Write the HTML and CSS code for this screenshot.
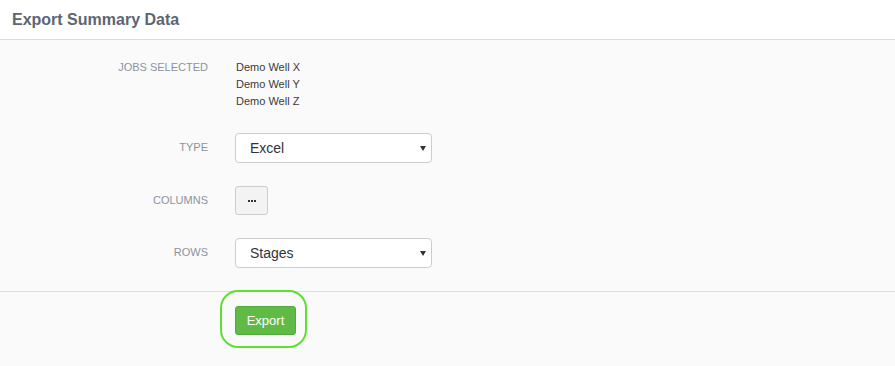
FILE: index.html
```html
<!DOCTYPE html>
<html lang="en">
<head>
    <meta charset="UTF-8">
    <title>Export Summary Data</title>
    <link rel="stylesheet" href="styles.css">
</head>
<body>

    <div class="panel-header">
        <h2>Export Summary Data</h2>
    </div>

    <div class="panel-body">
        <div class="form-row">
            <div class="form-label">Jobs Selected</div>
            <div class="jobs-list">
                <div>Demo Well X</div>
                <div>Demo Well Y</div>
                <div>Demo Well Z</div>
            </div>
        </div>

        <div class="form-row">
            <div class="form-label control-label">Type</div>
            <div class="select-box">
                <select>
                    <option>Excel</option>
                    <option>CSV</option>
                </select>
            </div>
        </div>

        <div class="form-row">
            <div class="form-label control-label">Columns</div>
            <button class="btn-more" type="button">
                <svg width="8" height="2" viewBox="0 0 8 2">
                    <rect x="0" y="0" width="2" height="2" fill="#333"/>
                    <rect x="3" y="0" width="2" height="2" fill="#333"/>
                    <rect x="6" y="0" width="2" height="2" fill="#333"/>
                </svg>
            </button>
        </div>

        <div class="form-row">
            <div class="form-label control-label">Rows</div>
            <div class="select-box">
                <select>
                    <option>Stages</option>
                    <option>Jobs</option>
                </select>
            </div>
        </div>
    </div>

    <div class="panel-footer">
        <div class="export-wrap">
            <button class="btn-export" type="button">Export</button>
            <span class="highlight-ring"></span>
        </div>
    </div>

</body>
</html>
```

FILE: styles.css
```css
body {
    margin: 0;
    font-family: 'Liberation Sans', Arial, sans-serif;
    background: #fafafa;
    color: #333;
}

.panel-header {
    background: #fff;
    height: 39px;
    border-bottom: 1px solid #dcdcdc;
    display: flex;
    align-items: center;
    padding-left: 12px;
}

.panel-header h2 {
    margin: 0;
    font-size: 16px;
    font-weight: bold;
    color: #5d6572;
}

.panel-body {
    padding: 19px 0 23px;
    display: flex;
    flex-direction: column;
    gap: 23px;
}

.form-row {
    display: grid;
    grid-template-columns: 208px auto;
    column-gap: 27px;
    align-items: start;
}

.form-label {
    text-align: right;
    font-size: 11px;
    line-height: 17px;
    text-transform: uppercase;
    color: #8b949e;
}

.control-label {
    padding-top: 6px;
}

.jobs-list {
    font-size: 11px;
    line-height: 17px;
    color: #3a3a3a;
    padding-left: 1px;
}

.select-box {
    position: relative;
    width: 197px;
}

.select-box select {
    appearance: none;
    -webkit-appearance: none;
    width: 197px;
    height: 30px;
    padding: 0 24px 0 14px;
    border: 1px solid #ccc;
    border-radius: 4px;
    background: #fff;
    font-family: 'Liberation Sans', Arial, sans-serif;
    font-size: 14px;
    color: #333;
    outline: none;
}

.select-box::after {
    content: '';
    position: absolute;
    right: 6px;
    top: 13px;
    border-left: 3px solid transparent;
    border-right: 3px solid transparent;
    border-top: 5px solid #333;
    pointer-events: none;
}

.btn-more {
    width: 33px;
    height: 29px;
    padding: 0;
    border: 1px solid #ccc;
    border-radius: 3px;
    background: #f3f3f3;
    display: flex;
    align-items: center;
    justify-content: center;
    cursor: pointer;
}

.panel-footer {
    border-top: 1px solid #dedede;
    padding: 14px 0 0 235px;
    height: 60px;
}

.export-wrap {
    position: relative;
    display: inline-block;
}

.btn-export {
    width: 61px;
    height: 29px;
    border: 1px solid #53a83d;
    border-radius: 3px;
    background: #5fbb46;
    color: #fff;
    font-family: 'Liberation Sans', Arial, sans-serif;
    font-size: 13px;
    cursor: pointer;
}

.highlight-ring {
    position: absolute;
    left: -15px;
    top: -16px;
    width: 83px;
    height: 54px;
    border: 2px solid #5ce12c;
    border-radius: 18px;
    pointer-events: none;
}
```
